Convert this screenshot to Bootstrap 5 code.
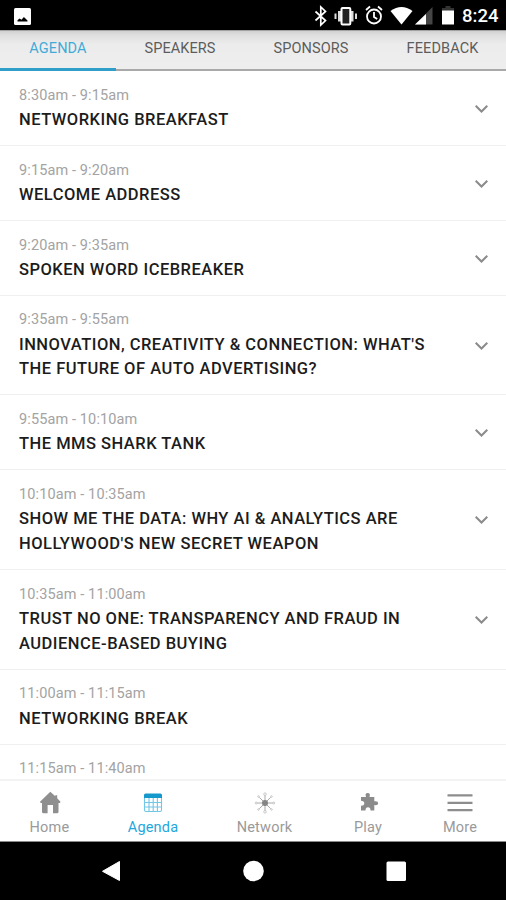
<!DOCTYPE html>
<html lang="en">
<head>
<meta charset="utf-8">
<meta name="viewport" content="width=device-width, initial-scale=1">
<title>Agenda</title>
<link href="https://cdn.jsdelivr.net/npm/bootstrap@5.3.0/dist/css/bootstrap.min.css" rel="stylesheet">
<style>
body{font-family:Roboto,"Liberation Sans",sans-serif;color:#1c1c1c}
svg{display:block;flex:none}
.screen{width:506px;height:900px}
.status{height:30px;padding:2px 9px 0 14px}
.clock{font-size:18.5px;font-weight:500;line-height:28px;width:35px;white-space:nowrap}
.tabs{height:41px;background:linear-gradient(#8b8b8b 0,#d2d2d2 1.5px,#dedede 5px,#ececec 14px,#eee)}
.tabs .nav-link{padding:0;color:#5c5c5c;font-size:14.5px;line-height:38px;border-bottom:2px solid #a9a9a9;border-radius:0;height:41px;letter-spacing:.1px}
.tabs .nav-link.active{color:#41abd8;border-bottom:3px solid #2f9fca}
.t1{width:116px}.t2{width:128px}.t3{width:134px}.tabs .t4{width:128px;padding-left:1px}
.agenda{height:708px}
.session{padding:12.8px 18px 12.1px 19px;border:0;border-bottom:1px solid #ededed;border-radius:0;color:inherit}
.list-group-flush>.session{border-color:#efefef}
.session .copy{width:425px}
.session svg{margin-top:1px}
.time{font-size:14.5px;line-height:24.2px;color:#a3a3a3;letter-spacing:.12px}
.title{font-size:16.5px;line-height:24.8px;font-weight:500;margin:0;letter-spacing:.49px}
.bottom{height:63px;border-top:2px solid #f3f3f3;border-bottom:1px solid #8a8a8a}
.bottom .nav-link{padding:9px 0 0;color:#9a9a9a;font-size:14.5px;line-height:20px;letter-spacing:.2px}
.bottom .nav-link.active{color:#1ea7dc}
.bottom svg{height:26px;margin-bottom:2px}
.b1{width:99px}.b2{width:108px}.b3{width:115px}.b4{width:92px}.b5{width:92px}
.system{height:58px}
</style>
</head>
<body>
<div class="screen d-flex flex-column overflow-hidden bg-white">
  <header class="status bg-black text-white d-flex align-items-center">
    <svg width="17" height="17" viewBox="0 0 17 17"><rect width="17" height="17" rx="1.500" fill="#fff"/><path d="M3.500 13.500v-1.200l2-1.800 2 1.300 2.400-2.700 3.600 3.400v1z" fill="#000"/></svg>
    <div class="ms-auto d-flex align-items-center">
      <svg width="147" height="28" viewBox="311 0 147 28">
        <path d="M315.500 9.500l10 9-4.700 4.500V5l4.700 4.500-10 9" fill="none" stroke="#fff" stroke-width="1.700"/>
        <rect x="338" y="9" width="15.500" height="10.500" fill="#ddd"/><rect x="341.500" y="6" width="8.800" height="16.500" rx="1" fill="#222" stroke="#fff" stroke-width="2"/><path d="M335.500 11.500v5.500M356 11.500v5.500" stroke="#ddd" stroke-width="2"/>
        <g fill="none" stroke="#fff" stroke-width="1.800"><circle cx="374" cy="14.500" r="7"/><path d="M374 10v5l3.200 2M366 8l4-3.500M382 8l-4-3.500"/></g>
        <path d="M390.500 9Q401.500 1 412.500 9L401.500 22.500z" fill="#fff"/>
        <path d="M432.500 5v17.500H415z" fill="#454545"/><path d="M426 12v10.500H415z" fill="#fff"/>
        <path d="M445.500 4h5v2h3.500v3.500h-12V6h3.500z" fill="#333"/><path d="M442 8.500h12v14h-12z" fill="#fff"/>
      </svg>
      <span class="clock ms-1">8:24</span>
    </div>
  </header>
  <nav class="tabs nav flex-nowrap text-center flex-shrink-0">
    <a class="nav-link active t1" href="#">AGENDA</a>
    <a class="nav-link t2" href="#">SPEAKERS</a>
    <a class="nav-link t3" href="#">SPONSORS</a>
    <a class="nav-link t4" href="#">FEEDBACK</a>
  </nav>
  <main class="agenda list-group list-group-flush overflow-hidden flex-shrink-0">
    <div class="session list-group-item d-flex justify-content-between align-items-center flex-shrink-0"><div class="copy"><div class="time">8:30am - 9:15am</div><h2 class="title">NETWORKING BREAKFAST</h2></div><svg width="13" height="8" viewBox="0 0 13 8"><path d="M.7.800l5.800 5.700L12.300.800" fill="none" stroke="#8b8b8b" stroke-width="2"/></svg></div>
    <div class="session list-group-item d-flex justify-content-between align-items-center flex-shrink-0"><div class="copy"><div class="time">9:15am - 9:20am</div><h2 class="title">WELCOME ADDRESS</h2></div><svg width="13" height="8" viewBox="0 0 13 8"><path d="M.7.800l5.800 5.700L12.300.800" fill="none" stroke="#8b8b8b" stroke-width="2"/></svg></div>
    <div class="session list-group-item d-flex justify-content-between align-items-center flex-shrink-0"><div class="copy"><div class="time">9:20am - 9:35am</div><h2 class="title">SPOKEN WORD ICEBREAKER</h2></div><svg width="13" height="8" viewBox="0 0 13 8"><path d="M.7.800l5.800 5.700L12.300.800" fill="none" stroke="#8b8b8b" stroke-width="2"/></svg></div>
    <div class="session list-group-item d-flex justify-content-between align-items-center flex-shrink-0"><div class="copy"><div class="time">9:35am - 9:55am</div><h2 class="title">INNOVATION, CREATIVITY &amp; CONNECTION: WHAT'S THE FUTURE OF AUTO ADVERTISING?</h2></div><svg width="13" height="8" viewBox="0 0 13 8"><path d="M.7.800l5.800 5.700L12.300.800" fill="none" stroke="#8b8b8b" stroke-width="2"/></svg></div>
    <div class="session list-group-item d-flex justify-content-between align-items-center flex-shrink-0"><div class="copy"><div class="time">9:55am - 10:10am</div><h2 class="title">THE MMS SHARK TANK</h2></div><svg width="13" height="8" viewBox="0 0 13 8"><path d="M.7.800l5.800 5.700L12.300.800" fill="none" stroke="#8b8b8b" stroke-width="2"/></svg></div>
    <div class="session list-group-item d-flex justify-content-between align-items-center flex-shrink-0"><div class="copy"><div class="time">10:10am - 10:35am</div><h2 class="title">SHOW ME THE DATA: WHY AI &amp; ANALYTICS ARE HOLLYWOOD'S NEW SECRET WEAPON</h2></div><svg width="13" height="8" viewBox="0 0 13 8"><path d="M.7.800l5.800 5.700L12.300.800" fill="none" stroke="#8b8b8b" stroke-width="2"/></svg></div>
    <div class="session list-group-item d-flex justify-content-between align-items-center flex-shrink-0"><div class="copy"><div class="time">10:35am - 11:00am</div><h2 class="title">TRUST NO ONE: TRANSPARENCY AND FRAUD IN AUDIENCE-BASED BUYING</h2></div><svg width="13" height="8" viewBox="0 0 13 8"><path d="M.7.800l5.800 5.700L12.300.800" fill="none" stroke="#8b8b8b" stroke-width="2"/></svg></div>
    <div class="session list-group-item flex-shrink-0"><div class="time">11:00am - 11:15am</div><h2 class="title">NETWORKING BREAK</h2></div>
    <div class="session list-group-item flex-shrink-0"><div class="time">11:15am - 11:40am</div></div>
  </main>
  <nav class="bottom nav flex-nowrap flex-shrink-0 text-center bg-white">
    <a class="nav-link b1 d-flex flex-column align-items-center" href="#"><svg width="26" viewBox="0 0 26 26"><path d="M13.300 1.800l5 4.500V5.200h1.900v3l3.300 3.600-.6 1.100H21.500v8.800q0 1.500-1.500 1.500H16V15h-5.400v8.200H6.500Q5 23.200 5 21.700v-8.800H3.700L3 11.800z" fill="#8f8f8f"/></svg>Home</a>
    <a class="nav-link active b2 d-flex flex-column align-items-center" href="#"><svg width="26" viewBox="0 0 26 26"><path d="M4 8V5q0-1.500 1.500-1.500h15Q22 3.500 22 5v3z" fill="#1599cc"/><path d="M4.500 8v12q0 1.500 1.500 1.500h14q1.500 0 1.500-1.500V8M4.500 12.500h17M4.500 17h17M9 8v13.500M13.200 8v13.500M17.400 8v13.500" fill="none" stroke="#72c6e6" stroke-width="1.100"/></svg>Agenda</a>
    <a class="nav-link b3 d-flex flex-column align-items-center" href="#"><svg width="26" viewBox="0 0 26 26"><path d="M13 5v16M5 13h16M7.300 7.300l11.400 11.400M18.700 7.300L7.300 18.700" stroke="#aaa" stroke-width="1"/><circle cx="13" cy="13" r="3" fill="#858585"/><g fill="#fff" stroke="#bbb" stroke-width=".8"><circle cx="13" cy="4.200" r="1.300"/><circle cx="13" cy="21.800" r="1.300"/><circle cx="4.200" cy="13" r="1"/><circle cx="21.800" cy="13" r="1"/><circle cx="6.500" cy="6.500" r=".8"/><circle cx="19.500" cy="6.500" r=".8"/><circle cx="6.500" cy="19.500" r=".8"/><circle cx="19.500" cy="19.500" r=".8"/></g></svg>Network</a>
    <a class="nav-link b4 d-flex flex-column align-items-center" href="#"><svg width="26" viewBox="0 0 26 26"><path d="M6 7h5Q9.600 3 12.700 3 15.800 3 14.500 7h4.800v4.300q3.900-.6 3.900 1.900t-3.900 1.900V20.500H15.500q0-3.300-2.500-3.300t-2.500 3.300H6v-4.800q3.300 0 3.300-2.500T6 10.700z" fill="#8b8b8b"/></svg>Play</a>
    <a class="nav-link b5 d-flex flex-column align-items-center" href="#"><svg width="26" viewBox="0 0 26 26"><path d="M.5 5.300h25M.5 12.800h25M.5 20.200h25" stroke="#8d8d8d" stroke-width="2.200"/></svg>More</a>
  </nav>
  <footer class="system bg-black flex-shrink-0">
    <svg width="506" height="58" viewBox="0 842 506 58" fill="#fff"><path d="M119.500 861.500v19L102.500 871.300z" stroke="#fff" stroke-linejoin="round"/><circle cx="253.500" cy="871" r="10.300"/><rect x="386.500" y="861.500" width="19.500" height="19.500" rx="1.500"/></svg>
  </footer>
</div>
<script src="https://cdn.jsdelivr.net/npm/bootstrap@5.3.0/dist/js/bootstrap.bundle.min.js"></script>
</body>
</html>
